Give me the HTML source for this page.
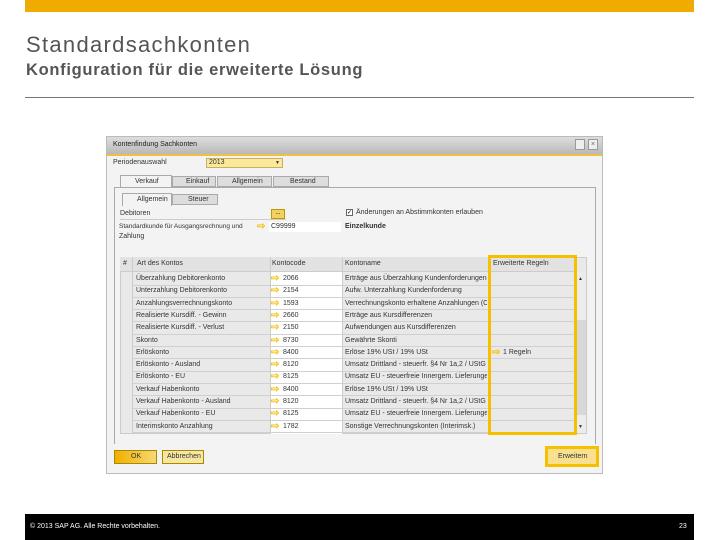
<!DOCTYPE html>
<html><head><meta charset="utf-8"><style>
*{margin:0;padding:0;box-sizing:border-box}
body{width:720px;height:540px;background:#fff;position:relative;overflow:hidden;font-family:"Liberation Sans",sans-serif}
.a{position:absolute}
.t{font-size:7px;color:#333;white-space:nowrap;line-height:12px}
.arr{color:#f0c000;font-size:10px;font-weight:bold;line-height:12px}
</style></head><body>
<div class="a" style="left:25px;top:0;width:669px;height:12px;background:#f0ab00"></div>
<div class="a" style="left:26px;top:32px;font-size:22px;letter-spacing:1.3px;color:#555">Standardsachkonten</div>
<div class="a" style="left:26px;top:61px;font-size:16.5px;letter-spacing:0.7px;font-weight:bold;color:#555">Konfiguration für die erweiterte Lösung</div>
<div class="a" style="left:25px;top:97px;width:669px;height:1px;background:#777"></div>

<!-- dialog -->
<div class="a" style="left:106px;top:136px;width:497px;height:338px;background:#f3f3f3;border:1px solid #bbb"></div>
<div class="a" style="left:107px;top:137px;width:495px;height:17px;background:linear-gradient(#ddd,#b9b9b9)"></div>
<div class="a t" style="left:113px;top:139px;color:#222">Kontenfindung Sachkonten</div>
<div class="a" style="left:575px;top:139px;width:10px;height:11px;background:#eee;border:1px solid #999"></div>
<div class="a" style="left:588px;top:139px;width:10px;height:11px;background:#eee;border:1px solid #999;font-size:7px;text-align:center;line-height:9px;color:#666">×</div>
<div class="a" style="left:107px;top:154px;width:495px;height:2px;background:#f0c040"></div>
<div class="a t" style="left:113px;top:157px">Periodenauswahl</div>
<div class="a" style="left:206px;top:158px;width:77px;height:10px;background:#fbe89a;border:1px solid #c8b060"></div>
<div class="a t" style="left:209px;top:157px">2013</div>
<div class="a t" style="left:275px;top:157px;font-size:5px">▼</div>
<!-- tabs -->
<div class="a" style="left:120px;top:175px;width:52px;height:13px;background:#f3f3f3;border:1px solid #aaa;border-bottom:none"></div>
<div class="a" style="left:172px;top:176px;width:44px;height:11px;background:#ddd;border:1px solid #aaa"></div>
<div class="a" style="left:217px;top:176px;width:55px;height:11px;background:#ddd;border:1px solid #aaa"></div>
<div class="a" style="left:273px;top:176px;width:56px;height:11px;background:#ddd;border:1px solid #aaa"></div>
<div class="a t" style="left:135px;top:176px">Verkauf</div>
<div class="a t" style="left:186px;top:176px">Einkauf</div>
<div class="a t" style="left:232px;top:176px">Allgemein</div>
<div class="a t" style="left:290px;top:176px">Bestand</div>
<div class="a" style="left:114px;top:187px;width:482px;height:257px;border:1px solid #aaa;border-bottom:none"></div>
<div class="a" style="left:122px;top:193px;width:50px;height:13px;background:#f3f3f3;border:1px solid #aaa;border-bottom:none"></div>
<div class="a" style="left:172px;top:194px;width:46px;height:11px;background:#ddd;border:1px solid #aaa"></div>
<div class="a t" style="left:137px;top:194px">Allgemein</div>
<div class="a t" style="left:188px;top:194px">Steuer</div>
<div class="a t" style="left:120px;top:208px">Debitoren</div>
<div class="a" style="left:120px;top:219px;width:166px;height:1px;background:#ccc"></div>
<div class="a" style="left:271px;top:209px;width:14px;height:10px;background:#f3d060;border:1px solid #b90;font-size:6px;text-align:center;line-height:7px">...</div>
<div class="a" style="left:346px;top:209px;width:7px;height:7px;border:1px solid #666;background:#fff;font-size:6px;line-height:6px">✓</div>
<div class="a t" style="left:356px;top:207px">Änderungen an Abstimmkonten erlauben</div>
<div class="a t" style="left:119px;top:221px;font-size:6.5px">Standardkunde für Ausgangsrechnung und</div>
<div class="a t" style="left:119px;top:231px">Zahlung</div>
<div class="a arr" style="left:257px;top:221px">⇨</div>
<div class="a" style="left:269px;top:222px;width:72px;height:10px;background:#fff"></div>
<div class="a t" style="left:271px;top:221px">C99999</div>
<div class="a t" style="left:345px;top:221px;font-weight:bold">Einzelkunde</div>

<!-- table -->
<div class="a" style="left:120px;top:257px;width:467px;height:177px;background:#e9e9e9;border:1px solid #ccc"></div>
<div class="a" style="left:120px;top:257px;width:455px;height:15px;background:#e2e2e2;border-bottom:1px solid #ccc"></div>
<div class="a t" style="left:123px;top:258px">#</div>
<div class="a t" style="left:137px;top:258px">Art des Kontos</div>
<div class="a t" style="left:272px;top:258px">Kontocode</div>
<div class="a t" style="left:345px;top:258px">Kontoname</div>
<div class="a t" style="left:493px;top:258px">Erweiterte Regeln</div>
<div class="a" style="left:270px;top:272px;width:73px;height:162px;background:#fff"></div>
<div class="a" style="left:132px;top:257px;width:1px;height:177px;background:#ccc"></div>
<div class="a" style="left:270px;top:257px;width:1px;height:177px;background:#ccc"></div>
<div class="a" style="left:342px;top:257px;width:1px;height:177px;background:#ccc"></div>
<div class="a" style="left:488px;top:257px;width:1px;height:177px;background:#ccc"></div>
<div class="a" style="left:576px;top:272px;width:10px;height:161px;background:#ececec"></div>
<div class="a" style="left:576px;top:320px;width:10px;height:95px;background:#d8d8d8"></div>
<div class="a t" style="left:578px;top:273px;font-size:5px">▲</div>
<div class="a t" style="left:578px;top:421px;font-size:5px">▼</div>
<div id="rows"></div>
<div class="a" style="left:488px;top:255px;width:89px;height:180px;border:3px solid #f5c000"></div>
<div class="a arr" style="left:492px;top:347px">⇨</div>
<div class="a t" style="left:503px;top:347px">1 Regeln</div>

<!-- buttons -->
<div class="a" style="left:114px;top:450px;width:43px;height:14px;background:linear-gradient(90deg,#f0b000,#f8d870);border:1px solid #a80"></div>
<div class="a t" style="left:131px;top:451px">OK</div>
<div class="a" style="left:162px;top:450px;width:42px;height:14px;background:#f7e6a0;border:1px solid #a80"></div>
<div class="a t" style="left:167px;top:451px">Abbrechen</div>
<div class="a" style="left:545px;top:446px;width:54px;height:21px;border:3px solid #f5c000;background:#f8e090"></div>
<div class="a t" style="left:558px;top:451px">Erweitern</div>

<div class="a" style="left:25px;top:514px;width:669px;height:26px;background:#000"></div>
<div class="a" style="left:30px;top:523px;font-size:7px;color:#fff">© 2013 SAP AG. Alle Rechte vorbehalten.</div>
<div class="a" style="left:679px;top:523px;font-size:7px;color:#fff">23</div>
<script>
var d=[["Überzahlung Debitorenkonto","2066","Erträge aus Überzahlung Kundenforderungen"],
["Unterzahlung Debitorenkonto","2154","Aufw. Unterzahlung Kundenforderung"],
["Anzahlungsverrechnungskonto","1593","Verrechnungskonto erhaltene Anzahlungen (Ob"],
["Realisierte Kursdiff. - Gewinn","2660","Erträge aus Kursdifferenzen"],
["Realisierte Kursdiff. - Verlust","2150","Aufwendungen aus Kursdifferenzen"],
["Skonto","8730","Gewährte Skonti"],
["Erlöskonto","8400","Erlöse 19% USt / 19% USt"],
["Erlöskonto - Ausland","8120","Umsatz Drittland - steuerfr. §4 Nr 1a,2 / UStG"],
["Erlöskonto - EU","8125","Umsatz EU - steuerfreie Innergem. Lieferungen"],
["Verkauf Habenkonto","8400","Erlöse 19% USt / 19% USt"],
["Verkauf Habenkonto - Ausland","8120","Umsatz Drittland - steuerfr. §4 Nr 1a,2 / UStG"],
["Verkauf Habenkonto - EU","8125","Umsatz EU - steuerfreie Innergem. Lieferungen"],
["Interimskonto Anzahlung","1782","Sonstige Verrechnungskonten (Interimsk.)"]],h="";
for(var i=0;i<d.length;i++){var y=273+i*12.3;
h+='<div class="a t" style="left:136px;top:'+y+'px">'+d[i][0]+'</div><div class="a arr" style="left:271px;top:'+y+'px">⇨</div><div class="a t" style="left:283px;top:'+y+'px">'+d[i][1]+'</div><div class="a t" style="left:345px;top:'+y+'px;width:142px;overflow:hidden">'+d[i][2]+'</div><div class="a" style="left:133px;top:'+(y+11.5)+'px;width:442px;height:1px;background:#d0d0d0"></div>';}
document.getElementById("rows").innerHTML=h;
</script>
</body></html>
